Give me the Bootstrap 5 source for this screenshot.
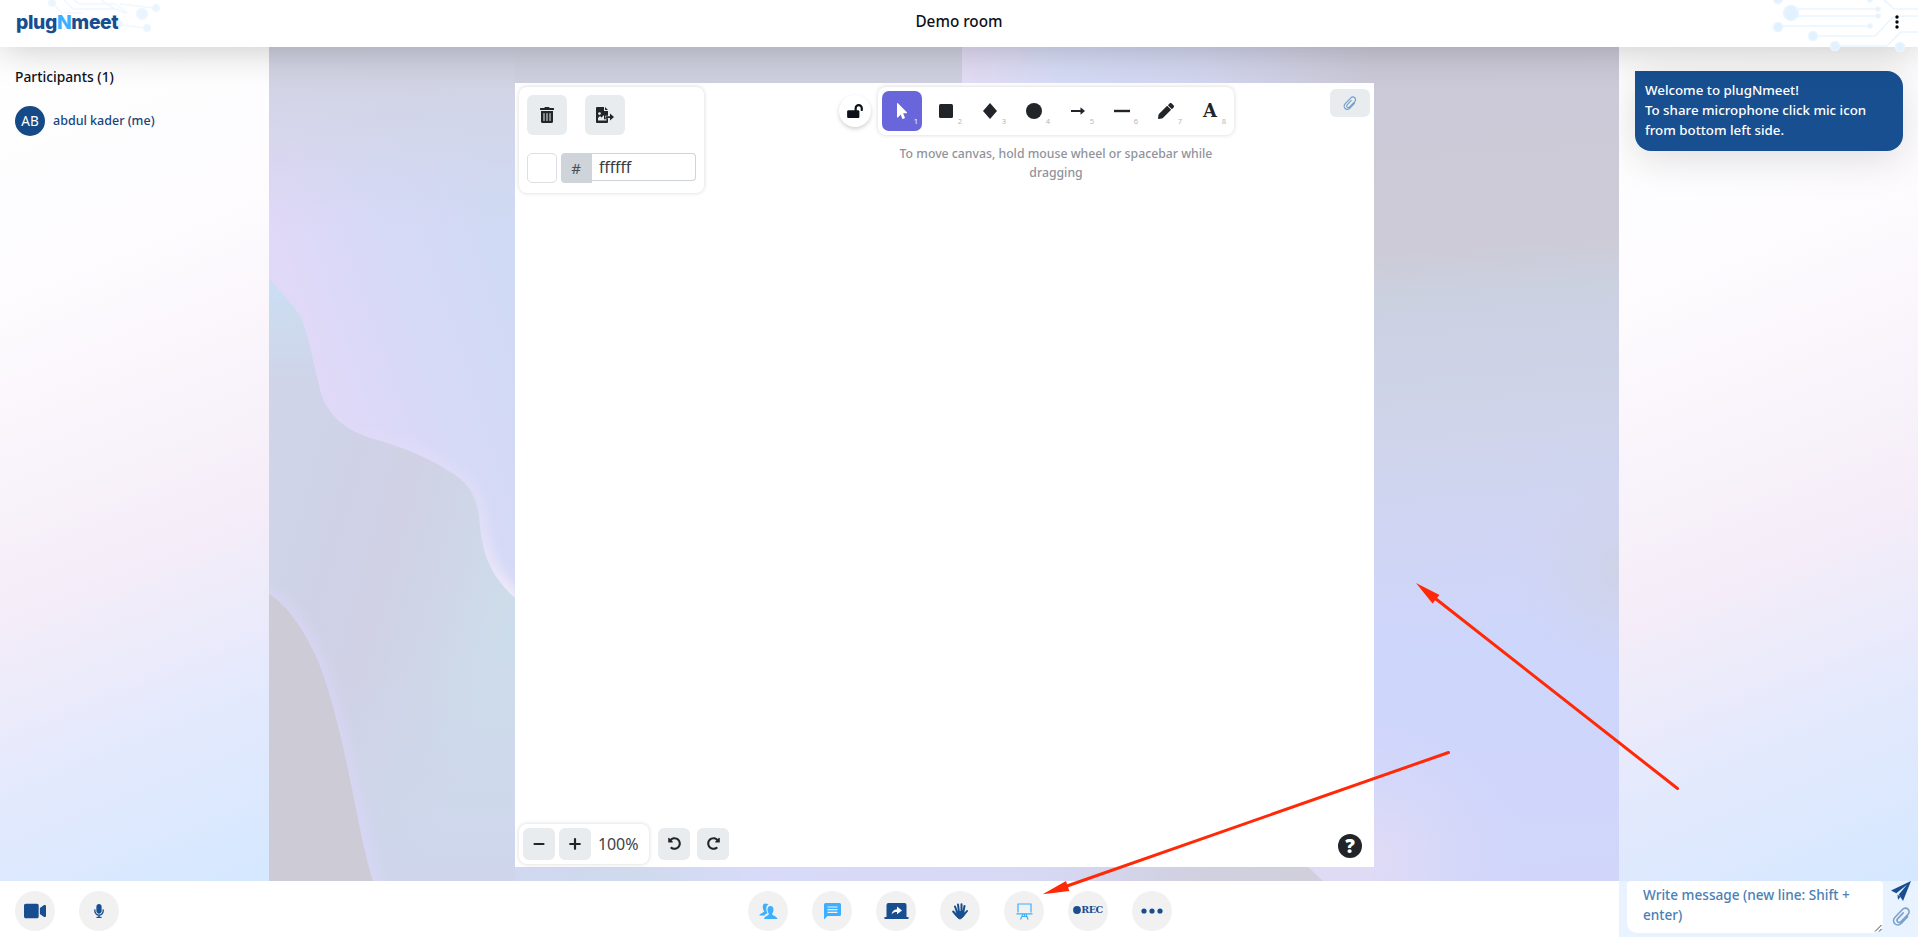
<!DOCTYPE html>
<html lang="en">
<head>
<meta charset="utf-8">
<meta name="viewport" content="width=device-width, initial-scale=1">
<title>plugNmeet - Demo room</title>
<link href="https://cdn.jsdelivr.net/npm/bootstrap@5.3.0/dist/css/bootstrap.min.css" rel="stylesheet">
<style>
  :root { --brand: #174e90; --sky: #3dafff; --ink: #212529; }
  body { font-family: "Noto Sans", sans-serif; font-size: 13.8px; line-height: 20px; color: #0d1218; background: #fff; overflow: hidden; }
  svg { display: block; }
  .topbar { height: 47px; box-shadow: 0 0 40px rgba(0,0,0,.24); z-index: 3; }
  .circuit { position: absolute; top: 0; pointer-events: none; }
  .logo { font: 800 19.3px/24px "Inter", sans-serif; letter-spacing: -.35px; color: var(--brand); margin-left: 16px; padding-bottom: 4px; position: relative; }
  .logo span { color: var(--sky); }
  .room-title { font-size: 15.3px; font-weight: 500; top: 11px; }
  .side-l { width: 269px; }
  .side-r { width: 299px; }
  .side-l, .side-r { background: linear-gradient(158deg, #fff 0%, #fdfbfe 28%, #f5edf8 60%, #e3e9fd 80%, #d6e8ff 98%); }
  .roster { padding: 20px 15px 0; }
  .roster-row { margin-top: 19px; }
  .avatar { width: 30px; height: 30px; background: #164a87; font-size: 13.5px; }
  .pname { color: #16467e; font-size: 12.5px; font-weight: 500; }
  .stage { padding: 36px 245px 14px 246px; background: #d0d4e8; }
  .wave { position: absolute; inset: 0; width: 100%; height: 100%; }
  .board { padding: 4px; }
  .island { background: #fff; border-radius: 8px; box-shadow: 0 0 4px rgba(0,0,0,.17); }
  .island-l { width: 185px; height: 106px; }
  .island-zoom { width: 130px; height: 40px; margin-bottom: -1px; }
  .tool { width: 40px; height: 40px; border-radius: 7px; color: var(--ink); position: relative; }
  .tool.on { background: #6965db; color: #fff; }
  .tool small { position: absolute; right: 4px; bottom: 2px; font-size: 7.6px; line-height: 16px; color: #b6b6c4; }
  .tool.on small { color: #fff; }
  .tool b { font: 700 18px/20px "DejaVu Serif", serif; }
  .gbtn { background: #e9ecef; color: var(--ink); border-radius: 6px; }
  .b40 { width: 40px; height: 40px; }
  .b32 { width: 32px; height: 32px; }
  .attach { width: 40px; height: 28px; margin-top: 2px; color: #74a0cb; }
  .lock { width: 32px; height: 32px; border-radius: 50%; background: #fff; box-shadow: 0 2px 4px rgba(0,0,0,.18); margin: 8px 7px 0 135px; }
  .hint { width: 330px; font-size: 12.25px; font-weight: 500; line-height: 19px; color: #8f939c; margin: 9px auto 0; }
  .swatch { width: 30px; height: 30px; border: 1px solid #dcdfe3; border-radius: 5px; }
  .hash { width: 31px; height: 30px; background: #ced4da; color: #495057; border-radius: 4px 0 0 4px; font-size: 15px; padding-right: 1px; }
  .hexin { width: 104px; height: 28px; border: 1px solid #ced4da; border-left: 0; border-radius: 0 4px 4px 0; padding: 0 7px; font-size: 15.6px; color: #343a40; outline: 0; }
  .zoomval { font-size: 16px; letter-spacing: -.1px; color: #3d4349; margin-left: 3px; }
  .bubble { margin: 24px 15px 0 16px; padding: 9px 10px; height: 80px; background: #184f90; border-radius: 0 16px 16px 16px; box-shadow: 0 8px 40px rgba(0,0,0,.13); font-size: 13.3px; font-weight: 500; }
  .bottombar { height: 57px; background: #fff; }
  .ctl { width: 40px; height: 40px; border-radius: 50%; background: #f1f1f1; color: var(--brand); }
  .rec { font: 700 9.6px/12px "DejaVu Serif", serif; letter-spacing: -.5px; padding-bottom: 2px; }
  .chatform { width: 299px; height: 56px; background: #e9f2ff; padding: 0 7px 0 8px; }
  .chatbox { width: 256px; height: 52px; border: 0; outline: 0; border-radius: 4px 4px 10px 10px; padding: 4px 16px 0; font-size: 13.6px; font-weight: 500; resize: none; overflow: hidden; color: var(--brand); }
  .chatbox::placeholder { color: #4a80b5; opacity: 1; }
  .arrows { position: absolute; left: 0; top: 0; z-index: 5; pointer-events: none; }
</style>
</head>
<body>
<svg width="0" height="0" class="position-absolute">
  <symbol id="clip" viewBox="0 0 24 24"><path d="M19.700 11.600 11.900 20c-2.300 2.500-6 2.700-8.300.5-2.300-2.200-2.200-5.700.2-8.200l9.700-10c1.900-2 4.900-2 6.700-.2 1.900 1.800 1.800 4.700 0 6.600l-8.800 9.200c-1.200 1.200-3 1.300-4.200.2-1.100-1.100-1.100-2.900.1-4.100l6.900-7.200" fill="none" stroke="currentColor" stroke-width="2" stroke-linecap="round"/></symbol>
  <symbol id="undo" viewBox="0 0 512 512"><path fill="currentColor" d="M255.545 8c-66.269.119-126.438 26.233-170.860 68.685L48.971 40.971C33.851 25.851 8 36.559 8 57.941V192c0 13.255 10.745 24 24 24h134.059c21.382 0 32.090-25.851 16.971-40.971l-41.750-41.750c30.864-28.899 70.801-44.907 113.230-45.273 92.398-.798 170.283 73.977 169.484 169.442C423.236 348.009 349.816 424 256 424c-41.127 0-79.997-14.678-110.630-41.556-4.743-4.161-11.906-3.908-16.368.553L89.340 422.659c-4.872 4.872-4.631 12.815.482 17.433C133.798 479.813 192.074 504 256 504c136.966 0 247.999-111.033 248-247.998C504.001 119.193 392.354 7.755 255.545 8z"/></symbol>
</svg>

<div class="vh-100 d-flex flex-column position-relative">
  <header class="topbar bg-white d-flex align-items-center justify-content-between position-relative">
    <svg class="circuit start-0" width="170" height="47" fill="#e9f4ff" stroke="#f0f8ff" stroke-width="1.500">
      <path fill="none" d="M52 3 62 13H83M64 0l9 9h44l9 5M74 0l5 4h36l13 9M101 0l14 9M90 17l16 4 22 5 18 2M120 4l34 4"/>
      <circle cx="142" cy="14" r="5.500"/><circle cx="156" cy="8" r="3.500"/><circle cx="147" cy="28" r="3.500"/><circle cx="52" cy="3" r="3.500"/><circle cx="119" cy="24" r="3"/>
    </svg>
    <div class="logo">plug<span>N</span>meet</div>
    <div class="room-title position-absolute start-50 translate-middle-x">Demo room</div>
    <svg class="circuit end-0" width="158" height="54" fill="#e2f1ff" stroke="#eaf5ff" stroke-width="1.600">
      <path fill="none" d="M30 9h88M30 16h88M18 26h92M53 36h62l18-19 12-1h13M75 46h52l14-14h17M122-2l12 11h24M18-1h92"/>
      <circle cx="31" cy="13" r="7.500"/><circle cx="18" cy="27" r="4.500"/><circle cx="53" cy="36" r="4.500"/><circle cx="75" cy="46" r="4.500"/><circle cx="140" cy="47" r="4.500"/><circle cx="118" cy="9" r="2"/><circle cx="118" cy="16" r="2"/><circle cx="110" cy="26" r="2"/><circle cx="18" cy="-1" r="4.500"/><circle cx="110" cy="0" r="2"/>
    </svg>
    <svg width="8" height="20" class="me-3 pb-1 position-relative" fill="#000"><circle cx="3" cy="3" r="1.700"/><circle cx="3" cy="8" r="1.700"/><circle cx="3" cy="13" r="1.700"/></svg>
  </header>

  <main class="d-flex flex-grow-1">
    <aside class="side-l">
      <div class="roster">
        <div class="fw-medium">Participants (1)</div>
        <div class="roster-row d-flex align-items-center">
          <span class="avatar rounded-circle text-white d-flex align-items-center justify-content-center">AB</span>
          <span class="pname ms-2">abdul kader (me)</span>
        </div>
      </div>
    </aside>

    <section class="stage flex-grow-1 position-relative d-flex">
      <svg class="wave" viewBox="269 47 1350 834" preserveAspectRatio="none">
        <defs>
          <linearGradient id="g1" x1="269" y1="330" x2="515" y2="250" gradientUnits="userSpaceOnUse"><stop offset="0" stop-color="#e3d8f8"/><stop offset=".5" stop-color="#d7d9f7"/><stop offset="1" stop-color="#cfdaf4"/></linearGradient>
          <linearGradient id="g1t" x1="0" y1="47" x2="0" y2="230" gradientUnits="userSpaceOnUse"><stop offset="0" stop-color="#cfd0df"/><stop offset=".3" stop-color="#d2d4e5" stop-opacity=".85"/><stop offset="1" stop-color="#d3d6e8" stop-opacity="0"/></linearGradient>
          <linearGradient id="g2" x1="269" y1="520" x2="515" y2="590" gradientUnits="userSpaceOnUse"><stop offset="0" stop-color="#cfd4e9"/><stop offset=".5" stop-color="#d0d1e5"/><stop offset="1" stop-color="#cddcea"/></linearGradient>
          <linearGradient id="g2b" x1="0" y1="280" x2="0" y2="380" gradientUnits="userSpaceOnUse"><stop offset="0" stop-color="#cbdff2"/><stop offset="1" stop-color="#cbdff2" stop-opacity="0"/></linearGradient>
          <linearGradient id="g2c" x1="0" y1="660" x2="0" y2="881" gradientUnits="userSpaceOnUse"><stop offset="0" stop-color="#cfd6ec" stop-opacity="0"/><stop offset="1" stop-color="#cfd6ec"/></linearGradient>
          <linearGradient id="g4" x1="962" y1="0" x2="1374" y2="0" gradientUnits="userSpaceOnUse"><stop offset="0" stop-color="#e3dcf4"/><stop offset=".25" stop-color="#d5dbf5"/><stop offset=".6" stop-color="#d2d5ee"/><stop offset="1" stop-color="#cbc9d7"/></linearGradient>
          <linearGradient id="g5" x1="1440" y1="47" x2="1500" y2="881" gradientUnits="userSpaceOnUse"><stop offset="0" stop-color="#cbc9d7"/><stop offset=".24" stop-color="#cdcbd7"/><stop offset=".3" stop-color="#cbd1e1"/><stop offset=".45" stop-color="#cfd4ea"/><stop offset=".6" stop-color="#d0d5f5"/><stop offset=".72" stop-color="#cdd6fb"/><stop offset="1" stop-color="#d1d5fa"/></linearGradient>
          <radialGradient id="g6" cx="1625" cy="570" r="110" gradientUnits="userSpaceOnUse"><stop offset="0" stop-color="#cfd3e6"/><stop offset="1" stop-color="#d2d4ee" stop-opacity="0"/></radialGradient>
          <radialGradient id="g8" cx="1376" cy="860" r="150" gradientUnits="userSpaceOnUse"><stop offset="0" stop-color="#e0dbf5"/><stop offset="1" stop-color="#d6d9fb" stop-opacity="0"/></radialGradient>
          <linearGradient id="g7" x1="515" y1="0" x2="1320" y2="0" gradientUnits="userSpaceOnUse"><stop offset="0" stop-color="#cfd8ef"/><stop offset=".15" stop-color="#cfdaed"/><stop offset=".3" stop-color="#d8daf9"/><stop offset=".65" stop-color="#d7d8f4"/><stop offset=".85" stop-color="#d1d0e0"/><stop offset="1" stop-color="#d0cfdb"/></linearGradient>
          <linearGradient id="rim" x1="340" y1="430" x2="515" y2="600" gradientUnits="userSpaceOnUse"><stop offset="0" stop-color="#ece4fa" stop-opacity="0"/><stop offset=".6" stop-color="#e2def8" stop-opacity=".8"/><stop offset="1" stop-color="#f6effa"/></linearGradient>
          <filter id="soft" x="-20%" y="-20%" width="140%" height="140%"><feGaussianBlur stdDeviation="6"/></filter>
          <clipPath id="above"><path id="up" d="M269 278 293 306C307 322 309 345 319 385 325 415 345 429 370 438 395 445 425 455 447 470 467 481 476 494 479 516 482 555 490 575 515 598V47H269z"/></clipPath>
          <clipPath id="mid"><path d="M269 278 293 306C307 322 309 345 319 385 325 415 345 429 370 438 395 445 425 455 447 470 467 481 476 494 479 516 482 555 490 575 515 598V881H373C358 835 349 755 326 683 312 640 290 607 269 594z"/></clipPath>
        </defs>
        <rect x="269" y="47" width="246" height="834" fill="url(#g2)"/>
        <rect x="269" y="270" width="246" height="110" fill="url(#g2b)"/>
        <rect x="269" y="660" width="246" height="221" fill="url(#g2c)"/>
        <use href="#up" fill="url(#g1)"/>
        <g clip-path="url(#above)"><path d="M340 423C345 429 370 438 370 438 395 445 425 455 447 470 467 481 476 494 479 516 482 555 490 575 518 602" fill="none" stroke="url(#rim)" stroke-width="13" filter="url(#soft)"/></g>
        <g clip-path="url(#mid)"><path d="M262 590C290 607 312 640 326 683 349 755 358 835 380 900" fill="none" stroke="#dad6f8" stroke-width="9" filter="url(#soft)"/></g>
        <path d="M269 594C290 607 312 640 326 683 349 755 358 835 373 881H269z" fill="#cdccd6"/>
        <rect x="269" y="47" width="246" height="190" fill="url(#g1t)"/>
        <rect x="515" y="47" width="447" height="60" fill="#cfd0df"/>
        <rect x="962" y="47" width="412" height="60" fill="url(#g4)"/>
        <rect x="515" y="850" width="860" height="31" fill="url(#g7)"/>
        <path d="M1290 850H1374V881H1323z" fill="#e0dbf5"/>
        <rect x="1374" y="47" width="245" height="834" fill="url(#g5)"/>
        <rect x="1374" y="440" width="245" height="300" fill="url(#g6)"/>
        <rect x="1374" y="600" width="245" height="281" fill="url(#g8)"/>
      </svg>

      <div class="board bg-white position-relative flex-grow-1 d-flex flex-column justify-content-between">
        <div class="d-flex align-items-start">
          <div class="island island-l p-2">
            <div class="d-flex" style="gap:18px">
              <span class="gbtn b40 d-flex align-items-center justify-content-center"><svg width="14" height="16" viewBox="0 0 448 512" fill="currentColor"><path d="M32 464a48 48 0 0 0 48 48h288a48 48 0 0 0 48-48V128H32zm272-256a16 16 0 0 1 32 0v224a16 16 0 0 1-32 0zm-96 0a16 16 0 0 1 32 0v224a16 16 0 0 1-32 0zm-96 0a16 16 0 0 1 32 0v224a16 16 0 0 1-32 0zM432 32H312l-9.400-18.700A24 24 0 0 0 281.100 0H166.800a23.720 23.720 0 0 0-21.400 13.300L136 32H16A16 16 0 0 0 0 48v32a16 16 0 0 0 16 16h416a16 16 0 0 0 16-16V48a16 16 0 0 0-16-16z"/></svg></span>
              <span class="gbtn b40 d-flex align-items-center justify-content-center"><svg width="18" height="16" viewBox="0 0 18 16" fill="currentColor"><path fill-rule="evenodd" d="M1 0H8V4H12V8.700H9V11.300H12V15a1 1 0 0 1-1 1H1a1 1 0 0 1-1-1V1a1 1 0 0 1 1-1ZM2 13.500H10.500V12.300H8V8L5.500 10.500 4 9 2 11ZM3.500 5.200a1.400 1.400 0 1 0 0 2.800 1.400 1.400 0 0 0 0-2.800Z"/><path d="M9 0 12 3H9ZM9.500 9.200H14V6.400L18 10 14 13.600V10.900H9.500Z"/></svg></span>
            </div>
            <div class="d-flex" style="margin-top:18px">
              <span class="swatch me-1"></span>
              <span class="hash d-flex align-items-center justify-content-center">#</span>
              <input class="hexin" value="ffffff" aria-label="Canvas background">
            </div>
          </div>
          <div class="lock d-flex align-items-center justify-content-center"><svg width="16" height="14" viewBox="0 0 576 512" fill="currentColor"><path d="M423.500 0C339.500.300 272 69.500 272 153.500V224H48c-26.500 0-48 21.500-48 48v192c0 26.500 21.500 48 48 48h352c26.500 0 48-21.500 48-48V272c0-26.500-21.500-48-48-48h-48v-71.100c0-39.600 31.700-72.500 71.300-72.900 40-.400 72.700 32.100 72.700 72v80c0 13.300 10.700 24 24 24h32c13.300 0 24-10.700 24-24v-80C576 68 507.500-.300 423.500 0z"/></svg></div>
          <div>
            <div class="island d-flex gap-1 p-1">
              <div class="tool on d-flex align-items-center justify-content-center"><svg width="10" height="16" viewBox="0 0 320 512" fill="currentColor"><path d="M302.189 329.126H196.105l55.831 135.993c3.889 9.428-.555 19.999-9.444 23.999l-49.165 21.427c-9.165 4-19.443-.571-23.332-9.714l-53.053-129.136-86.664 89.138C18.729 472.710 0 463.554 0 447.977V18.299C0 1.899 19.921-6.096 30.277 5.443l284.412 292.542c11.472 11.179 3.007 31.141-12.500 31.141z"/></svg><small>1</small></div>
              <div class="tool d-flex align-items-center justify-content-center"><svg width="14" height="14"><rect width="14" height="14" rx="1.500" fill="currentColor"/></svg><small>2</small></div>
              <div class="tool d-flex align-items-center justify-content-center"><svg width="14" height="16"><path d="M7 0 14 8 7 16 0 8z" fill="currentColor"/></svg><small>3</small></div>
              <div class="tool d-flex align-items-center justify-content-center"><svg width="16" height="16"><circle cx="8" cy="8" r="8" fill="currentColor"/></svg><small>4</small></div>
              <div class="tool d-flex align-items-center justify-content-center"><svg width="14" height="10"><path d="M0 4H9.500V1.200L14 5 9.500 8.800V6H0z" fill="currentColor"/></svg><small>5</small></div>
              <div class="tool d-flex align-items-center justify-content-center"><svg width="16" height="4"><rect y=".8" width="16" height="2.400" fill="currentColor"/></svg><small>6</small></div>
              <div class="tool d-flex align-items-center justify-content-center"><svg width="16" height="16" viewBox="0 0 512 512" fill="currentColor"><path d="M497.900 142.100l-46.100 46.100c-4.700 4.700-12.300 4.700-17 0l-111-111c-4.700-4.700-4.700-12.300 0-17l46.100-46.100c18.700-18.700 49.100-18.700 67.900 0l60.100 60.100c18.800 18.700 18.800 49.100 0 67.900zM284.200 99.800L21.600 362.400.400 483.900c-2.900 16.400 11.400 30.600 27.800 27.800l121.500-21.300 262.600-262.600c4.700-4.700 4.700-12.300 0-17l-111-111c-4.800-4.700-12.400-4.700-17.100 0z"/></svg><small>7</small></div>
              <div class="tool d-flex align-items-center justify-content-center"><b>A</b><small>8</small></div>
            </div>
            <div class="hint text-center">To move canvas, hold mouse wheel or spacebar while dragging</div>
          </div>
          <span class="gbtn attach ms-auto d-flex align-items-center justify-content-center"><svg width="14" height="15"><use href="#clip"/></svg></span>
        </div>

        <div class="d-flex align-items-center">
          <div class="island island-zoom d-flex align-items-center gap-1 p-1">
            <span class="gbtn b32 d-flex align-items-center justify-content-center"><svg width="12" height="12" stroke="currentColor" stroke-width="2.200" stroke-linecap="round"><path d="M1.500 6h9"/></svg></span>
            <span class="gbtn b32 d-flex align-items-center justify-content-center"><svg width="12" height="12" stroke="currentColor" stroke-width="2.200" stroke-linecap="round"><path d="M1.200 6h9.600M6 1.200v9.600"/></svg></span>
            <span class="zoomval">100%</span>
          </div>
          <span class="gbtn b32 d-flex align-items-center justify-content-center" style="margin-left:9px"><svg width="13" height="13"><use href="#undo"/></svg></span>
          <span class="gbtn b32 d-flex align-items-center justify-content-center" style="margin-left:7px"><svg width="13" height="13" style="transform:scaleX(-1)"><use href="#undo"/></svg></span>
          <svg class="ms-auto me-2 mt-1" width="24" height="24"><circle cx="12" cy="12" r="12" fill="#212529"/><text x="12" y="18.500" text-anchor="middle" font-family="Open Sans" font-weight="800" font-size="19" fill="#fff">?</text></svg>
        </div>
      </div>
    </section>

    <aside class="side-r">
      <div class="bubble text-white">Welcome to plugNmeet!<br>To share microphone click mic icon<br>from bottom left side.</div>
    </aside>
  </main>

  <footer class="bottombar d-flex justify-content-between align-items-start position-relative">
    <div class="d-flex gap-4" style="padding:10px 0 0 15px">
      <span class="ctl d-flex align-items-center justify-content-center"><svg width="22" height="18" viewBox="0 32 576 448" fill="currentColor"><path d="M336.200 64H47.800C21.400 64 0 85.400 0 111.800v288.400C0 426.600 21.400 448 47.800 448h288.400c26.400 0 47.800-21.400 47.800-47.800V111.800c0-26.400-21.400-47.800-47.800-47.800zm189.400 37.700L416 177.300v157.400l109.600 75.500c21.200 14.600 50.400-.300 50.400-25.800V127.500c0-25.400-29.100-40.400-50.400-25.800z"/></svg></span>
      <span class="ctl d-flex align-items-center justify-content-center"><svg width="10" height="14" viewBox="0 0 352 512" fill="currentColor"><path d="M176 352c53.020 0 96-42.980 96-96V96c0-53.020-42.980-96-96-96S80 42.980 80 96v160c0 53.020 42.980 96 96 96zm160-160h-16c-8.840 0-16 7.160-16 16v48c0 74.800-64.490 134.820-140.790 127.380C96.710 376.890 48 317.110 48 250.300V208c0-8.840-7.160-16-16-16H16c-8.840 0-16 7.160-16 16v40.160c0 89.640 63.970 169.550 152 181.690V464H96c-8.840 0-16 7.160-16 16v16c0 8.840 7.160 16 16 16h160c8.840 0 16-7.160 16-16v-16c0-8.840-7.160-16-16-16h-56v-33.770C285.710 418.470 352 344.900 352 256v-48c0-8.840-7.160-16-16-16z"/></svg></span>
    </div>
    <div class="d-flex gap-4" style="padding:10px 0 0 182px">
      <span class="ctl d-flex align-items-center justify-content-center" style="color:var(--sky)"><svg width="19" height="16" viewBox="0 0 19 16" fill="currentColor"><path d="M7.500 1C6 0 4 .8 3.800 3 3.700 5 4 7 5.300 8.300 5 9.500 1.500 10 .2 12.500H5.500C6 11 8 10.500 8.500 10 7.200 8.500 7 5 7.800 3 8.300 2 9 1.800 9.500 1.600 9 .6 8.200.4 7.500 1Z"/><path d="M11.500 3C9.400 3 8.500 4.500 8.500 6.800 8.500 8.600 9.200 10 10 10.700 10 12.500 5.500 13 5 16H18.500C18 13 13 12.500 13 10.700 13.900 10 14.500 8.600 14.500 6.800 14.500 4.500 13.600 3 11.500 3Z"/></svg></span>
      <span class="ctl d-flex align-items-center justify-content-center" style="color:var(--sky)"><svg width="17" height="17" viewBox="0 0 17 17"><path d="M1.500 0H15.500A1.500 1.500 0 0 1 17 1.500V11.500A1.500 1.500 0 0 1 15.500 13H3.500L0 16.500V1.500A1.500 1.500 0 0 1 1.500 0Z" fill="currentColor"/><path d="M3.500 4h10M3.500 6.700h10M3.500 9.400h10" stroke="#f1f1f1" stroke-width="1.200"/></svg></span>
      <span class="ctl d-flex align-items-center justify-content-center"><svg width="25" height="17" viewBox="0 0 25 17"><path d="M4.500 0H20.500A2 2 0 0 1 22.500 2V14H24.500V16H.500V14H2.500V2A2 2 0 0 1 4.500 0Z" fill="currentColor"/><path d="M13 3.500 18 7.500 13 11.200V9C10.500 9 9 9.500 7.500 11.500 8 8.500 9.500 6.500 13 6.200Z" fill="#fff"/></svg></span>
      <span class="ctl d-flex align-items-center justify-content-center"><svg width="16" height="17" viewBox="0 0 16 17" fill="none" stroke="currentColor" stroke-width="2" stroke-linecap="round"><path d="M3 3.500 5 9M6 1.500 6.800 8M9.500 1.200V8M12.500 3 11.300 9M1.200 8.500 4.500 12.500M15 8 11 13"/><path d="M4.500 8.500H11.800L12.500 11 10.500 14.500 8.500 15.800H7L5 14Z" fill="currentColor" stroke-width="1" stroke-linejoin="round"/></svg></span>
      <span class="ctl d-flex align-items-center justify-content-center" style="color:var(--sky)"><svg width="17" height="17" viewBox="0 0 17 17" fill="none" stroke="currentColor" stroke-width="1.200"><path d="M2 9.500V1H15V9.500M.5 10.800H16.500M7 11 4.500 16.500M8.500 11V14M10 11 12 16.500M6.500 13.500H10.500"/></svg></span>
      <span class="ctl rec d-flex align-items-center justify-content-center"><svg width="8" height="8"><circle cx="4" cy="4" r="3.900" fill="currentColor"/></svg>REC</span>
      <span class="ctl d-flex align-items-center justify-content-center"><svg width="22" height="6" fill="currentColor"><circle cx="3" cy="3" r="2.600"/><circle cx="11" cy="3" r="2.600"/><circle cx="19" cy="3" r="2.600"/></svg></span>
    </div>
    <div class="chatform d-flex justify-content-between">
      <div class="position-relative">
        <textarea class="chatbox" placeholder="Write message (new line: Shift + enter)"></textarea>
        <svg class="position-absolute" style="right:1px;top:43px" width="8" height="8" stroke="#444"><path d="M1 7.500 7.500 1M5 7.500 7.500 5"/></svg>
      </div>
      <div class="d-flex flex-column align-items-center" style="gap:6px">
        <svg width="20" height="20" viewBox="0 0 20 20" fill="#174e90"><path d="M20 0 0 9.500 5.300 12.300 16 3.800 7.800 13.500 12 20Z"/><path d="M6.500 13.500 9.500 16 7 18.800Z"/></svg>
        <svg width="19" height="20" style="color:#7ba1cb"><use href="#clip"/></svg>
      </div>
    </div>
  </footer>

  <svg class="arrows" width="1918" height="938" fill="#ff2907" stroke="#ff2907">
    <path d="M1436 599 1677.500 788.500M1067 886 1448.500 752.500" stroke-width="3" stroke-linecap="round" fill="none"/>
    <path d="M1416 583 1439.500 595 1432.500 603.500ZM1042.700 894.300 1066 881 1069.300 891Z" stroke="none"/>
  </svg>
</div>
<script src="https://cdn.jsdelivr.net/npm/bootstrap@5.3.0/dist/js/bootstrap.bundle.min.js"></script>
</body>
</html>
